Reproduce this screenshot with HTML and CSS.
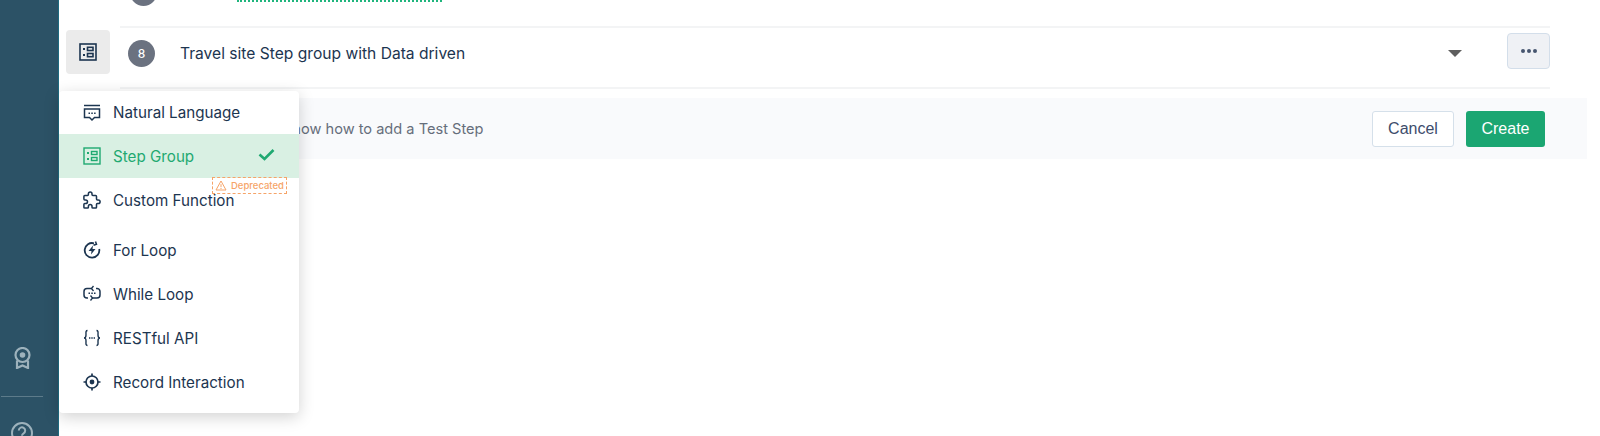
FILE: index.html
```html
<!DOCTYPE html>
<html lang="en">
<head>
  <meta charset="UTF-8">
  <title>Test Steps</title>
  <link rel="stylesheet" href="styles.css">
</head>
<body>

  <!-- Left nav -->
  <aside class="sidebar">
    <svg class="nav-icon" width="17" height="22" viewBox="0 0 17 22" fill="none" stroke="#9db2bc" stroke-width="2.200">
      <circle cx="8.500" cy="8" r="7"/>
      <circle cx="8.500" cy="8" r="2.800" fill="#9db2bc" stroke="none"/>
      <path d="M3 13.500V21l5.500-2.500L14 21v-7.500"/>
    </svg>
    <div class="nav-line"></div>
    <svg class="nav-icon" width="22" height="22" viewBox="0 0 22 22" fill="none" stroke="#9db2bc" stroke-width="2">
      <circle cx="11" cy="11" r="10"/>
      <path d="M7.800 8.500a3.200 3.200 0 1 1 4.800 2.800c-1 .6-1.600 1.200-1.600 2.500"/>
    </svg>
  </aside>

  <main class="content">
    <div class="gutter">
      <div class="type-btn">
        <svg width="18" height="18" viewBox="0 0 18 18" fill="none" stroke="#1c3550" stroke-width="1.600">
          <rect x="1" y="1" width="16" height="16"/>
          <rect x="8.500" y="4.300" width="5.500" height="3.200"/>
          <rect x="8.500" y="10.500" width="5.500" height="3.200"/>
          <path d="M4 5.900h2M4 12.100h2" stroke-width="2"/>
        </svg>
      </div>
    </div>

    <div class="steps">
      <div class="step-prev">
        <span class="step-num prev-num"></span>
        <span class="dotted"></span>
      </div>

      <div class="step-row">
        <span class="step-num">8</span>
        <span class="step-title">Travel site Step group with Data driven</span>
        <span class="caret"></span>
        <button class="more-btn"><i></i><i></i><i></i></button>
      </div>

      <div class="create-bar">
        <span class="hint">Show how to add a Test Step</span>
        <button class="btn btn-cancel">Cancel</button>
        <button class="btn btn-create">Create</button>
      </div>
    </div>
  </main>

  <!-- Step type dropdown -->
  <div class="type-menu">
    <div class="menu-item first-item">
      <svg class="menu-icon" width="18" height="18" viewBox="0 0 18 18" fill="none" stroke="#1c3550" stroke-width="1.500">
        <path d="M1 1.500h16"/>
        <path d="M1.500 5h15v8.500h-5L9 16l-2.500-2.500h-5z"/>
        <path d="M5.500 9.200h1.500M8.300 9.200h1.500M11.100 9.200h1.500" stroke-width="1.600"/>
      </svg>
      <span>Natural Language</span>
    </div>
    <div class="menu-item active">
      <svg class="menu-icon" width="18" height="18" viewBox="0 0 18 18" fill="none" stroke="#1fa971" stroke-width="1.400">
        <rect x="1" y="1" width="16" height="16"/>
        <rect x="8.500" y="4.500" width="5.500" height="3"/>
        <rect x="8.500" y="10.500" width="5.500" height="3"/>
        <path d="M4 6h2M4 12h2" stroke-width="1.800"/>
      </svg>
      <span>Step Group</span>
      <svg class="check" width="17" height="13" viewBox="0 0 17 13" fill="none" stroke="#1fa971" stroke-width="2.600">
        <path d="M1.500 6.500l5 4.500 9-9"/>
      </svg>
    </div>
    <div class="deprecated">
      <svg width="12" height="11" viewBox="0 0 12 11" fill="none" stroke="#f6a468" stroke-width="1">
        <path d="M6 1l5 9H1z"/>
        <path d="M6 4.200v3M6 8v1"/>
      </svg>
      <span>Deprecated</span>
    </div>
    <div class="menu-item">
      <svg class="menu-icon" width="18" height="18" viewBox="2 2 20 20" fill="none" stroke="#1c3550" stroke-width="1.700" stroke-linejoin="round">
        <path d="M4 7h3a1 1 0 0 0 1-1V5a2 2 0 0 1 4 0v1a1 1 0 0 0 1 1h3a1 1 0 0 1 1 1v3a1 1 0 0 0 1 1h1a2 2 0 0 1 0 4h-1a1 1 0 0 0-1 1v3a1 1 0 0 1-1 1h-3a1 1 0 0 1-1-1v-1a2 2 0 0 0-4 0v1a1 1 0 0 1-1 1H4a1 1 0 0 1-1-1v-3a1 1 0 0 1 1-1h1a2 2 0 0 0 0-4H4a1 1 0 0 1-1-1V8a1 1 0 0 1 1-1"/>
      </svg>
      <span>Custom Function</span>
    </div>
    <div class="menu-item loop-first">
      <svg class="menu-icon" width="18" height="18" viewBox="0 0 18 18" fill="none" stroke="#1c3550" stroke-width="1.800">
        <path d="M11 2.300A7.300 7.300 0 1 0 16.200 8"/>
        <path d="M12.500 .5l1 2.800-3 1" stroke-width="1.500"/>
        <path d="M10 4.500L5.500 10h3L8 13.500 12.500 8h-3z" fill="#1c3550" stroke="none"/>
      </svg>
      <span>For Loop</span>
    </div>
    <div class="menu-item">
      <svg class="menu-icon" width="18" height="18" viewBox="0 0 18 18" fill="none" stroke="#1c3550" stroke-width="1.500">
        <path d="M9 3.500H4a3 3 0 0 0-3 3v3.500a3 3 0 0 0 3 3h1"/>
        <path d="M9 13h5a3 3 0 0 0 3-3V6.500a3 3 0 0 0-3-3h-1"/>
        <path d="M10.500 1L8.500 3.500l2 2.500M7.500 10.500l2 2.500-2 2.500" stroke-width="1.300"/>
        <path d="M5.500 8.300h1.500M8.300 8.300h1.500M11 8.300h1.500" stroke-width="1.400"/>
      </svg>
      <span>While Loop</span>
    </div>
    <div class="menu-item">
      <svg class="menu-icon" width="18" height="18" viewBox="0 0 18 18" fill="none" stroke="#1c3550" stroke-width="1.400">
        <path d="M4.500 1.500C2.500 1.500 3 3.500 3 6c0 2-.5 3-2 3 1.500 0 2 1 2 3 0 2.500-.5 4.500 1.500 4.500"/>
        <path d="M13.500 1.500c2 0 1.500 2 1.500 4.500 0 2 .5 3 2 3-1.500 0-2 1-2 3 0 2.500.5 4.500-1.500 4.500"/>
        <path d="M6 9h1.400M8.300 9h1.400M10.600 9H12" stroke-width="1.300"/>
      </svg>
      <span>RESTful API</span>
    </div>
    <div class="menu-item">
      <svg class="menu-icon" width="18" height="18" viewBox="0 0 18 18" fill="none" stroke="#1c3550" stroke-width="1.700">
        <circle cx="9" cy="9" r="6"/>
        <circle cx="9" cy="9" r="2.400" fill="#1c3550" stroke="none"/>
        <path d="M9 .5v2.500M9 15v2.500M.5 9H3M15 9h2.500"/>
      </svg>
      <span>Record Interaction</span>
    </div>
  </div>

</body>
</html>
```

FILE: styles.css
```css
body {
  margin: 0;
  display: flex;
  position: relative;
  height: 436px;
  overflow: hidden;
  background: #fff;
  font-family: Inter, "Noto Sans", sans-serif;
  color: #1c3550;
}

.sidebar {
  width: 59px;
  flex: none;
  background: #2c5266;
  border-right: 1px solid #1f6b80;
  box-sizing: border-box;
  display: flex;
  flex-direction: column;
  align-items: center;
  padding: 347px 14px 0 0;
}

.nav-icon {
  flex: none;
}

.nav-line {
  width: 42px;
  height: 1px;
  margin: 27px 0 25px;
  background: #5d7b8a;
  flex: none;
}

.content {
  flex: 1;
  display: flex;
  padding-left: 7px;
}

.gutter {
  width: 44px;
  flex: none;
  padding-top: 30px;
  margin-right: 10px;
}

.type-btn {
  width: 44px;
  height: 44px;
  background: #ebebeb;
  border-radius: 4px;
  display: flex;
  align-items: center;
  justify-content: center;
}

.steps {
  flex: 1;
  min-width: 0;
}

.step-prev {
  width: 1430px;
  height: 28px;
  box-sizing: border-box;
  display: flex;
  align-items: flex-start;
  padding-left: 10px;
  border-bottom: 2px solid #f3f4f5;
}

.prev-num {
  margin-top: -21px;
}

.dotted {
  width: 205px;
  margin-left: 80px;
  border-top: 2px dotted #1fb57d;
}

.step-row {
  width: 1430px;
  height: 61px;
  box-sizing: border-box;
  display: flex;
  align-items: center;
  padding: 0 0 8px 8px;
  border-bottom: 2px solid #f3f4f5;
}

.step-num {
  width: 27px;
  height: 27px;
  border-radius: 50%;
  background: #6b7280;
  color: #fff;
  font-size: 12px;
  font-weight: 500;
  display: flex;
  align-items: center;
  justify-content: center;
  flex: none;
}

.step-title {
  margin-left: 25px;
  font-size: 15.600px;
  flex: 1;
}

.caret {
  width: 0;
  height: 0;
  border-left: 7px solid transparent;
  border-right: 7px solid transparent;
  border-top: 7px solid #5f5f5f;
  margin-right: 45px;
}

.more-btn {
  width: 43px;
  height: 36px;
  margin-bottom: 5px;
  padding: 0;
  background: #eff1f5;
  border: 1px solid #d3deea;
  border-radius: 4px;
  display: flex;
  align-items: center;
  justify-content: center;
  gap: 2px;
}

.more-btn i {
  width: 4px;
  height: 4px;
  border-radius: 50%;
  background: #46556f;
}

.create-bar {
  margin-top: 9px;
  height: 61px;
  width: 1467px;
  background: #f9fafc;
  display: flex;
  align-items: center;
  padding-right: 42px;
  box-sizing: border-box;
}

.hint {
  flex: 1;
  font-size: 14.600px;
  color: #666e7b;
  padding: 1px 0 0 163px;
}

.btn {
  height: 36px;
  padding-top: 2px;
  border-radius: 3px;
  font-family: "Liberation Sans", Arial, sans-serif;
  font-size: 16px;
}

.btn-cancel {
  width: 82px;
  background: #fff;
  border: 1px solid #d5e0ea;
  color: #3d4c6b;
  margin-right: 12px;
}

.btn-create {
  width: 79px;
  background: #1ba672;
  border: none;
  color: #fff;
}

/* dropdown over the page */
.type-menu {
  position: absolute;
  left: 59px;
  top: 91px;
  width: 240px;
  height: 322px;
  background: #fff;
  border-radius: 4px;
  box-shadow: 0 4px 16px rgba(0, 0, 0, 0.18);
}

.menu-item {
  height: 44px;
  display: flex;
  align-items: center;
  padding-left: 24px;
  font-size: 15.200px;
}

.first-item {
  height: 43px;
}

.menu-item span {
  margin-left: 12px;
}

.menu-icon {
  flex: none;
}

.menu-item.active {
  background: #d9f0e3;
  color: #1fa971;
  position: relative;
}

.check {
  position: absolute;
  left: 199px;
  top: 14px;
}

.loop-first {
  margin-top: 6px;
}

.deprecated {
  position: absolute;
  left: 153px;
  top: 86px;
  width: 75px;
  height: 17px;
  box-sizing: border-box;
  border: 1px dashed #f6a468;
  color: #f6a468;
  font-size: 9.500px;
  font-weight: 500;
  display: flex;
  align-items: center;
  justify-content: center;
  gap: 4px;
}
```
